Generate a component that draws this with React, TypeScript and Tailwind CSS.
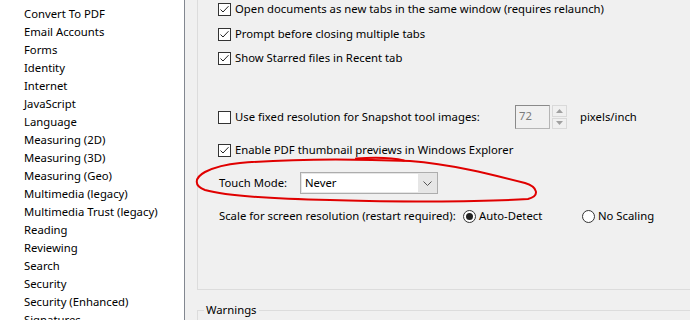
import React from "react";

const Check = ({ checked }: { checked: boolean }) => (
  <svg width="13" height="13" viewBox="0 0 13 13" className="shrink-0">
    <rect x="0.5" y="0.5" width="12" height="12" fill="#fff" stroke="#333" />
    {checked && (
      <path d="M2.5 6.5 L5 9 L10.5 3.2" fill="none" stroke="#222" strokeWidth="1" />
    )}
  </svg>
);

const Radio = ({ checked }: { checked: boolean }) => (
  <svg width="13" height="13" viewBox="0 0 13 13" className="shrink-0">
    <circle cx="6.5" cy="6.5" r="6" fill="#fff" stroke="#333" />
    {checked && <circle cx="6.5" cy="6.5" r="3.5" fill="#222" />}
  </svg>
);

const items = [
  "Convert To PDF",
  "Email Accounts",
  "Forms",
  "Identity",
  "Internet",
  "JavaScript",
  "Language",
  "Measuring (2D)",
  "Measuring (3D)",
  "Measuring (Geo)",
  "Multimedia (legacy)",
  "Multimedia Trust (legacy)",
  "Reading",
  "Reviewing",
  "Search",
  "Security",
  "Security (Enhanced)",
  "Signatures",
];

export default function App() {
  return (
    <div
      className="relative w-[690px] h-[320px] overflow-hidden bg-[#f0f0f0] flex text-black text-[11.3px]"
      style={{ fontFamily: '"Noto Sans", "Open Sans", sans-serif' }}
    >
      {/* Left list */}
      <div className="w-[185px] h-full shrink-0 bg-white border-r border-[#828790] pt-[5px] pl-[24px]">
        {items.map((t) => (
          <div key={t} className="h-[18px] leading-[18px] whitespace-nowrap">
            {t}
          </div>
        ))}
      </div>

      {/* Right panel */}
      <div className="flex-1 pl-[12px] flex flex-col">
        <div className="h-[290px] shrink-0 border-l border-b border-[#dcdcdc] pl-[20px] flex flex-col">
          <div className="h-[18px] flex items-center gap-[4px] whitespace-nowrap">
            <Check checked />
            <span>Open documents as new tabs in the same window (requires relaunch)</span>
          </div>
          <div className="mt-[7px] h-[18px] flex items-center gap-[4px] whitespace-nowrap">
            <Check checked />
            <span>Prompt before closing multiple tabs</span>
          </div>
          <div className="mt-[6px] h-[18px] flex items-center gap-[4px] whitespace-nowrap">
            <Check checked />
            <span>Show Starred files in Recent tab</span>
          </div>

          <div className="mt-[38px] h-[24px] flex items-center whitespace-nowrap">
            <div className="w-[297px] flex items-center gap-[4px]">
              <Check checked={false} />
              <span>Use fixed resolution for Snapshot tool images:</span>
            </div>
            <div className="w-[35px] h-[24px] border border-[#b5b5b5] border-t-[#8a8a8a] border-l-[#8a8a8a] bg-[#f0f0f0] text-[#7a7a7a] pl-[3px] leading-[20px]">
              72
            </div>
            <div className="ml-[2px] w-[15px] h-[24px] flex flex-col gap-[1px]">
              <div className="flex-1 border border-[#d9d9d9] flex items-center justify-center">
                <svg width="7" height="4" viewBox="0 0 7 4">
                  <path d="M0 4 L3.5 0 L7 4 Z" fill="#a0a0a0" />
                </svg>
              </div>
              <div className="flex-1 border border-[#d9d9d9] flex items-center justify-center">
                <svg width="7" height="4" viewBox="0 0 7 4">
                  <path d="M0 0 L3.5 4 L7 0 Z" fill="#a0a0a0" />
                </svg>
              </div>
            </div>
            <span className="ml-[13px]">pixels/inch</span>
          </div>

          <div className="mt-[12px] h-[18px] flex items-center gap-[4px] whitespace-nowrap">
            <Check checked />
            <span>Enable PDF thumbnail previews in Windows Explorer</span>
          </div>

          <div className="mt-[13px] h-[22px] flex items-center whitespace-nowrap">
            <span className="w-[82px] pl-[1px]">Touch Mode:</span>
            <div className="w-[138px] h-[22px] border border-[#adadad] bg-[#e6e6e6] p-[1px] flex">
              <div className="w-[116px] bg-white pl-[3px] flex items-center">Never</div>
              <div className="flex-1 flex items-center justify-center">
                <svg width="9" height="5" viewBox="0 0 9 5">
                  <path d="M0.5 0.5 L4.5 4.5 L8.5 0.5" fill="none" stroke="#555" strokeWidth="1" />
                </svg>
              </div>
            </div>
          </div>

          <div className="mt-[13px] h-[18px] flex items-center whitespace-nowrap">
            <span className="w-[245px] pl-[1px]">Scale for screen resolution (restart required):</span>
            <div className="w-[119px] flex items-center gap-[3px]">
              <Radio checked />
              <span>Auto-Detect</span>
            </div>
            <div className="flex items-center gap-[3px]">
              <Radio checked={false} />
              <span>No Scaling</span>
            </div>
          </div>
        </div>

        <fieldset className="mt-[13px] border-t border-l border-[#dcdcdc] h-[40px] pl-[6px]">
          <legend className="px-[2px] leading-[14px]">Warnings</legend>
        </fieldset>
      </div>

      {/* Red freehand annotation */}
      <svg
        className="absolute inset-0 pointer-events-none"
        width="690"
        height="320"
        viewBox="0 0 690 320"
      >
        <path
          d="M 240 163 C 300 158, 360 159, 410 161 C 450 164, 490 174, 525 183 C 538 187, 540 196, 528 199 C 480 202, 380 202, 330 200 C 280 199, 230 197, 205 190 C 194 186, 194 178, 205 172 C 215 167, 228 164, 240 163"
          fill="none"
          stroke="#e00000"
          strokeWidth="2"
          strokeLinecap="round"
        />
        <path
          d="M 356 158.5 C 375 157, 392 157.5, 404 160.5"
          fill="none"
          stroke="#e00000"
          strokeWidth="2"
          strokeLinecap="round"
        />
      </svg>
    </div>
  );
}
